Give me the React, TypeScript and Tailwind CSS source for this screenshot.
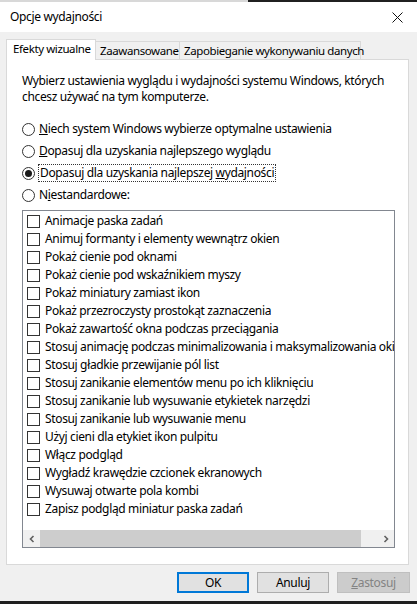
import React from "react";

const items = [
  "Animacje paska zadań",
  "Animuj formanty i elementy wewnątrz okien",
  "Pokaż cienie pod oknami",
  "Pokaż cienie pod wskaźnikiem myszy",
  "Pokaż miniatury zamiast ikon",
  "Pokaż przezroczysty prostokąt zaznaczenia",
  "Pokaż zawartość okna podczas przeciągania",
  "Stosuj animację podczas minimalizowania i maksymalizowania okien",
  "Stosuj gładkie przewijanie pól list",
  "Stosuj zanikanie elementów menu po ich kliknięciu",
  "Stosuj zanikanie lub wysuwanie etykietek narzędzi",
  "Stosuj zanikanie lub wysuwanie menu",
  "Użyj cieni dla etykiet ikon pulpitu",
  "Włącz podgląd",
  "Wygładź krawędzie czcionek ekranowych",
  "Wysuwaj otwarte pola kombi",
  "Zapisz podgląd miniatur paska zadań",
];

function Radio({ checked, children, focus }: { checked?: boolean; children: React.ReactNode; focus?: boolean }) {
  return (
    <div className="h-[22px] flex items-center">
      <div className="w-[13px] h-[13px] rounded-full border border-[#333333] bg-white flex items-center justify-center">
        {checked && <div className="w-[7px] h-[7px] rounded-full bg-[#1a1a1a]" />}
      </div>
      <div
        className={
          focus
            ? "ml-[3px] px-[1px] h-[18px] flex items-center border border-dotted border-[#333333]"
            : "ml-[4px] h-[18px] flex items-center"
        }
      >
        {children}
      </div>
    </div>
  );
}

export default function App() {
  return (
    <div
      className="w-[417px] h-[604px] bg-[#f0f0f0] flex flex-col overflow-hidden text-[12px] tracking-[-0.35px] text-black"
      style={{ fontFamily: '"Noto Sans", "Liberation Sans", sans-serif' }}
    >
      <div className="h-[2px] flex">
        <div className="w-[248px] bg-[#d8d8d8]" />
        <div className="flex-1 bg-[#202020]" />
      </div>
      <div className="h-[30px] bg-white flex items-center justify-between pl-[10px] pr-[10px]">
        <span className="text-[12px] whitespace-nowrap">Opcje wydajności</span>
        <svg width="11" height="11" viewBox="0 0 11 11" className="mr-[4px]">
          <path d="M0.5 0.5 L10.5 10.5 M10.5 0.5 L0.5 10.5" stroke="#111" strokeWidth="1" />
        </svg>
      </div>
      <div className="flex-1 flex flex-col pl-[6px] pr-[7px] pt-[7px]">
        <div className="flex items-end h-[20px] whitespace-nowrap text-[11.5px] tracking-[-0.4px]">
          <div className="w-[90px] h-[21px] -mb-px relative z-10 bg-white border border-b-0 border-[#d9d9d9] pl-[6px] flex items-center">
            <span className="-mt-[2px]">Efekty wizualne</span>
          </div>
          <div className="w-[84px] h-[18px] bg-[#f0f0f0] border border-l-0 border-b-0 border-[#d9d9d9] pl-[4px] flex items-center">
            Zaawansowane
          </div>
          <div className="w-[181px] h-[18px] bg-[#f0f0f0] border border-l-0 border-b-0 border-[#d9d9d9] pl-[4px] flex items-center">
            Zapobieganie wykonywaniu danych
          </div>
        </div>
        <div className="w-[403px] h-[506px] bg-white border border-[#d9d9d9] pl-[15px] pt-[13px] flex flex-col">
          <p className="leading-[16px] whitespace-nowrap">
            Wybierz ustawienia wyglądu i wydajności systemu Windows, których
            <br />
            chcesz używać na tym komputerze.
          </p>
          <div className="mt-[13px] flex flex-col whitespace-nowrap">
            <Radio>
              <span>
                <span className="underline">N</span>iech system Windows wybierze optymalne ustawienia
              </span>
            </Radio>
            <Radio>
              <span>
                <span className="underline">D</span>opasuj dla uzyskania najlepszego wyglądu
              </span>
            </Radio>
            <Radio checked focus>
              <span>
                Dopasuj dla uzyskania najlepszej <span className="underline">w</span>ydajności
              </span>
            </Radio>
            <Radio>
              <span>
                N<span className="underline">i</span>estandardowe:
              </span>
            </Radio>
          </div>
          <div className="mt-[4px] w-[373px] h-[338px] border border-[#828790] flex flex-col overflow-hidden">
            <div className="flex-1 pt-[1px] overflow-hidden">
              {items.map((t) => (
                <div key={t} className="h-[18px] flex items-center pl-[4px] whitespace-nowrap">
                  <div className="w-[13px] h-[13px] shrink-0 border border-[#333333] bg-white" />
                  <span className="ml-[5px]">{t}</span>
                </div>
              ))}
            </div>
            <div className="h-[17px] flex bg-[#f0f0f0]">
              <div className="w-[17px] flex items-center justify-center">
                <svg width="8" height="8" viewBox="0 0 8 8">
                  <path d="M5.5 1 L2.5 4 L5.5 7" stroke="#606060" strokeWidth="1.6" fill="none" />
                </svg>
              </div>
              <div className="w-[321px] bg-[#cdcdcd]" />
              <div className="flex-1" />
              <div className="w-[17px] flex items-center justify-center">
                <svg width="8" height="8" viewBox="0 0 8 8">
                  <path d="M2.5 1 L5.5 4 L2.5 7" stroke="#606060" strokeWidth="1.6" fill="none" />
                </svg>
              </div>
            </div>
          </div>
        </div>
        <div className="mt-[7px] flex justify-end gap-[8px]">
          <div className="w-[72px] h-[21px] bg-[#e1e1e1] border-2 border-[#0078d7] flex items-center justify-center">
            OK
          </div>
          <div className="w-[72px] h-[21px] bg-[#e1e1e1] border border-[#adadad] flex items-center justify-center">
            Anuluj
          </div>
          <div className="w-[73px] h-[21px] bg-[#cccccc] border border-[#bfbfbf] flex items-center justify-center text-[#838383]">
            <span>
              <span className="underline">Z</span>astosuj
            </span>
          </div>
        </div>
      </div>
      <div className="h-[3px] bg-[#1f1f1f]" />
    </div>
  );
}
